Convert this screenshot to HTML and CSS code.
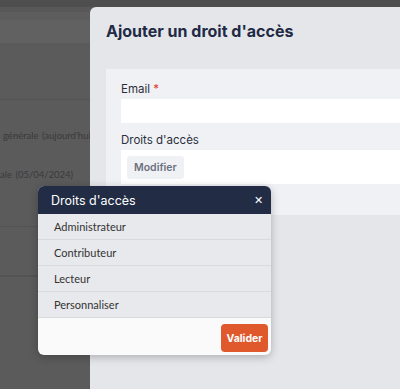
FILE: index.html
```html
<!DOCTYPE html>
<html lang="fr">
<head>
  <meta charset="UTF-8" />
  <title>Ajouter un droit d'accès</title>
  <link rel="stylesheet" href="styles.css">
</head>
<body>
  <div class="page">
    <div class="bar bar-top"></div>
    <div class="bar bar-2"></div>
    <div class="bar bar-3"></div>
    <div class="bar bar-4"></div>
    <div class="row row-a"></div>
    <div class="row row-b"><span>générale (aujourd'hui à 18:00)</span></div>
    <div class="row row-c"><span>ale (05/04/2024)</span></div>
    <div class="row row-d"></div>
    <div class="row row-e"></div>
  </div>

  <div class="modal">
    <div class="modal-head">
      <h1>Ajouter un droit d'accès</h1>
    </div>
    <div class="modal-body">
      <label class="field-label">Email <span class="req">*</span></label>
      <div class="input"></div>
      <label class="field-label">Droits d'accès</label>
      <div class="rights">
        <button class="btn-light">Modifier</button>
      </div>
    </div>
  </div>

  <div class="popup">
    <div class="popup-head">
      <span>Droits d'accès</span>
      <span class="close">&#x2715;</span>
    </div>
    <ul class="popup-list">
      <li>Administrateur</li>
      <li>Contributeur</li>
      <li>Lecteur</li>
      <li>Personnaliser</li>
    </ul>
    <div class="popup-foot">
      <button class="btn-primary">Valider</button>
    </div>
  </div>
</body>
</html>
```

FILE: styles.css
```css
* {
  margin: 0;
  padding: 0;
  box-sizing: border-box;
}
body {
  font-family: 'Lato', 'Liberation Sans', sans-serif;
  background: #5b5b5c;
  width: 400px; height: 389px;
  overflow: hidden;
  position: relative;
}

/* BACKGROUND PAGE (dimmed) */
.page { width: 100%; }
.bar-top { height: 7px; background: #4e4e4f; }
.bar-2 { height: 5px; background: #585859; }
.bar-3 { height: 8px; background: #5d5d5e; }
.bar-4 { height: 23px; background: #616162; }
.row {
  border-bottom: 1px solid #535354;
  color: #393a3b; font-size: 9.5px; word-spacing: 1px;
  white-space: nowrap;
}
.row-a { height: 57px; }
.row-b { height: 69px; padding: 30px 0 0 3px; border-bottom: none; }
.row-c { height: 58px; padding: 0; }
.row-d { height: 49px; }

/* MODAL */
.modal {
  position: absolute; left: 90px; top: 7px;
  width: 330px; height: 400px;
  background: #e5e6ea;
  border-radius: 6px 0 0 0;
}
.modal-head { height: 62px; padding: 14px 16px 0; }
.modal-head h1 {
  font-family: 'Inter', sans-serif;
  font-size: 16px; font-weight: 700;
  color: #1f2a44;
}
.modal-body {
  margin-left: 16px;
  background: #f0f1f5;
  padding: 14px 0 31px 15px;
}
.field-label {
  display: block;
  font-family: 'Inter', sans-serif;
  font-size: 11.5px; line-height: 13px; color: #2b2f3a;
  margin-bottom: 3px;
}
.req { color: #e03b2b; }
.input { height: 24px; background: #fff; margin-bottom: 11px; }
.rights { background: #fff; height: 34px; padding: 5px 6px; }
.btn-light {
  font-family: 'Inter', sans-serif;
  font-size: 10.5px; font-weight: 600;
  color: #6b7080; background: #f0f1f4;
  border: none; border-radius: 3px;
  height: 23px; padding: 0 7px;
}

/* POPUP */
.popup {
  position: absolute; left: 38px; top: 186px;
  width: 233px;
  border-radius: 6px; overflow: hidden;
  background: #fafafa;
  box-shadow: 0 2px 8px rgba(0,0,0,0.25);
}
.popup-head {
  height: 28px; background: #222d45; color: #fff;
  display: flex; align-items: center; justify-content: space-between;
  padding: 0 8px 0 13px;
  font-family: 'Inter', sans-serif; font-size: 12.5px;
}
.close { font-size: 11px; }
.popup-list { list-style: none; background: #e8e9ec; }
.popup-list li {
  height: 26px; line-height: 26px;
  padding-left: 16px;
  font-size: 11px; color: #333;
  border-bottom: 1px solid #d9dadd;
}
.popup-foot { height: 37px; padding: 6px 3px 0; display: flex; justify-content: flex-end; }
.btn-primary {
  width: 47px; height: 28px;
  background: #e0592c; color: #fff;
  border: none; border-radius: 4px;
  font-family: 'Inter', sans-serif;
  font-size: 10.5px; font-weight: 700;
}
```
